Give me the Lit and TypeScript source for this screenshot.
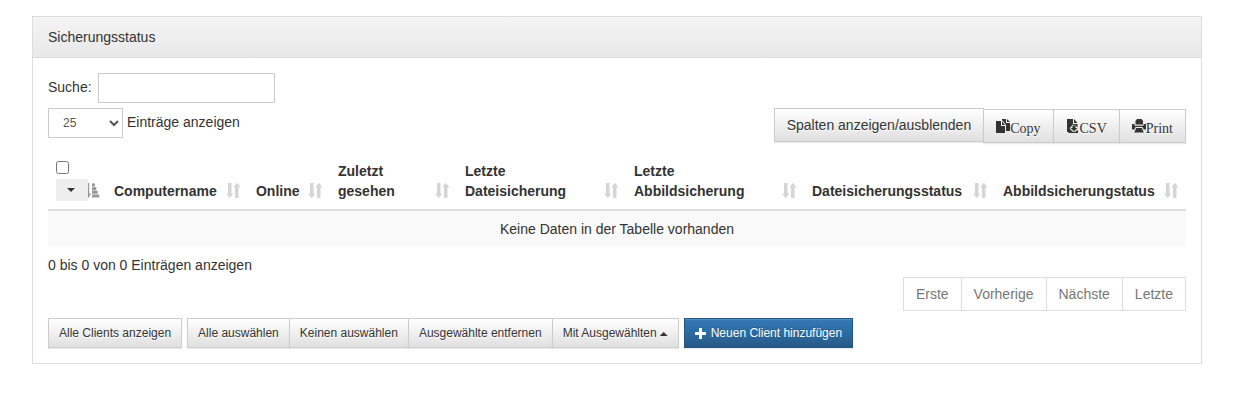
import { LitElement, html, css, svg } from "lit";
import { customElement } from "lit/decorators.js";

const icon = (name: string, body: unknown, height = 14) => html`
  <svg class="icon ${name}" width="14" height=${height} viewBox="0 0 14 ${height}" aria-hidden="true">${body}</svg>`;

const duplicate = svg`
  <path d="M0 2h5v5h4v7H0z M6 2.300 9 6H6z"/>
  <path d="M6 0h4v4h4v8h-4V6L6.500 1.500H6z M11 0l3 3h-3z"/>`;
const saveFile = svg`
  <path d="M1 0h6v5h4.500v3.500L9.500 6.500 6.500 5.500 5 8 3.500 9l2 3-1.500 1H1z"/>
  <path d="M8 0 11.500 4H8z"/>
  <path d="M6.500 6.500h3V9h2L8 12.300 4.500 9h2z"/>
  <path d="M2.500 11.200h2.500l1.500 1.600h3l1.500-1.600H12V14H2.500z"/>`;
const printer = svg`
  <path d="M5 0h4.500l1.500 2v3.500H3.500V2z"/>
  <path d="M0 5h2.500v1.700h9V5H14v5.500h-2.300L10.500 8h-7L2.300 10.500H0z"/>
  <path d="M4.200 9h5.600l2 4.500H2.200z"/>`;
const sortBoth = svg`
  <path d="M2 0h3.500v10.500H7.300L4 15h-.4L0 10.500h2z"/>
  <path d="M9 15h3.500V4.500h2L11 0h-.4L7.200 4.500H9z"/>`;
const sortAsc = svg`
  <path d="M2.200 0h2v10.500h2L3.500 15 0 10.500h2.200z"/>
  <path d="M7 .500h3v3H7z M7 4.200h4.300v3H7z M7 7.800h5.700v3H7z M7 11.400h7.300v3H7z"/>`;
const plus = svg`<path d="M4 0h3v4h4v3H7v4H4V7H0V4h4z"/>`;

const columns = [
  { label: "Computername", width: 142 },
  { label: "Online", width: 82 },
  { label: "Zuletzt gesehen", width: 127 },
  { label: "Letzte Dateisicherung", width: 169 },
  { label: "Letzte Abbildsicherung", width: 178 },
  { label: "Dateisicherungsstatus", width: 191 },
  { label: "Abbildsicherungstatus", width: 191 },
];
const total = 1138;
const share = (width: number) => `width:${(width / total) * 100}%`;

@customElement("app-root")
export class AppRoot extends LitElement {
  static styles = css`
    :host {
      display: block;
      padding: 16px 42px 16px 32px;
      font: 14px/20px "Liberation Sans", Arial, sans-serif;
      color: #333;
    }
    *, *::before, *::after { box-sizing: border-box; }
    .panel { border: 1px solid #ddd; background: #fff; }
    .heading {
      padding: 10px 15px;
      border-bottom: 1px solid #ddd;
      background: linear-gradient(#f5f5f5, #e8e8e8);
    }
    .title { margin: 0; font: inherit; }
    .body { padding: 15px; }
    .search, .length-label { display: flex; align-items: flex-start; height: 30px; }
    .search { gap: 6px; }
    .length-label { gap: 4px; }
    .field-label { padding-top: 4px; }
    input, select, button { font-family: inherit; border-radius: 0; margin: 0; }
    .search-box, .length {
      height: 30px;
      border: 1px solid #ccc;
      background: #fff;
      color: #555;
      font-size: 12px;
      padding: 5px 10px;
    }
    .search-box { width: 177px; }
    .length { width: 75px; }
    .tools { display: flex; justify-content: space-between; align-items: flex-start; margin-top: 5px; }
    .group { display: flex; align-items: flex-start; }
    .group > * + * { margin-left: -1px; }
    .export { padding-top: 1px; font-family: "Liberation Serif", serif; }
    .btn {
      display: flex;
      align-items: center;
      padding: 6px 12px;
      font-size: 14px;
      line-height: 20px;
      color: #333;
      white-space: nowrap;
      border: 1px solid #ccc;
      background: linear-gradient(#fff, #e0e0e0);
      text-shadow: 0 1px 0 #fff;
      box-shadow: inset 0 1px 0 rgba(255, 255, 255, 0.15), 0 1px 1px rgba(0, 0, 0, 0.075);
    }
    .export .btn { align-items: flex-start; padding: 9px 12px 3px; }
    .small { padding: 5px 10px; font-size: 12px; line-height: 18px; }
    .primary {
      gap: 5px;
      color: #fff;
      border-color: #245580;
      background: linear-gradient(#337ab7, #265a88);
      text-shadow: 0 -1px 0 rgba(0, 0, 0, 0.2);
    }
    .icon { display: block; flex: none; fill: currentColor; overflow: visible; }
    .caret {
      width: 8px;
      height: 4px;
      background: currentColor;
      clip-path: polygon(0 0, 100% 0, 50% 100%);
    }
    .caret.up { clip-path: polygon(50% 0, 100% 100%, 0 100%); margin: 2px 0 0 3px; }
    table { width: 100%; margin-top: 10px; border-collapse: collapse; table-layout: fixed; }
    th { padding: 8px; text-align: left; vertical-align: bottom; border-bottom: 2px solid #ddd; }
    .head { display: flex; align-items: flex-end; justify-content: space-between; }
    .head .icon { opacity: 0.2; margin-bottom: 3px; }
    .name { min-width: 0; padding-right: 14px; }
    .head.tight .name { padding-right: 0; white-space: nowrap; }
    .select-head { position: relative; display: flex; flex-direction: column; height: 40px; justify-content: space-between; }
    .check { width: 13px; height: 13px; }
    .menu {
      position: relative;
      display: flex;
      align-items: center;
      justify-content: center;
      width: 32px;
      height: 22px;
      padding: 0 2px 0 0;
      border: 0;
      background: #eee;
      color: #333;
    }
    .select-head .icon { position: absolute; right: -1px; bottom: 3px; opacity: 0.5; }
    td { padding: 8px; text-align: center; background: #f9f9f9; }
    .info { margin-top: 8px; }
    .pages { display: flex; justify-content: flex-end; margin: 2px 0 7px; padding: 0; list-style: none; }
    .pages li + li { margin-left: -1px; }
    .pages a {
      display: block;
      padding: 6px 12px;
      border: 1px solid #ddd;
      color: #777;
      text-decoration: none;
    }
    .actions { display: flex; gap: 5px; flex-wrap: wrap; }
  `;

  render() {
    return html`
      <section class="panel">
        <header class="heading"><h3 class="title">Sicherungsstatus</h3></header>
        <div class="body">
          <div class="search">
            <label class="field-label" for="search">Suche:</label>
            <input class="search-box" id="search" type="search" />
          </div>
          <div class="tools">
            <div class="length-label">
              <select class="length" id="length">
                <option>10</option>
                <option selected>25</option>
                <option>50</option>
                <option>100</option>
              </select>
              <label class="field-label" for="length">Einträge anzeigen</label>
            </div>
            <div class="group">
              <button class="btn" type="button">Spalten anzeigen/ausblenden</button>
              <div class="group export">
                <button class="btn" type="button">${icon("dup", duplicate)}<span>Copy</span></button>
                <button class="btn" type="button">${icon("save", saveFile)}<span>CSV</span></button>
                <button class="btn" type="button">${icon("print", printer)}<span>Print</span></button>
              </div>
            </div>
          </div>
          <table>
            <colgroup>
              <col style=${share(58)} />
              ${columns.map((c) => html`<col style=${share(c.width)} />`)}
            </colgroup>
            <thead>
              <tr>
                <th>
                  <div class="select-head">
                    <input class="check" type="checkbox" aria-label="Alle auswählen" />
                    ${icon("asc", sortAsc, 15)}
                    <button class="menu" type="button" aria-label="Auswahl"><span class="caret"></span></button>
                  </div>
                </th>
                ${columns.map(
                  (c) => html`<th>
                    <div class="head ${c.label.includes(" ") ? "" : "tight"}">
                      <span class="name">${c.label}</span>${icon("sort", sortBoth, 15)}
                    </div>
                  </th>`
                )}
              </tr>
            </thead>
            <tbody>
              <tr><td colspan="8">Keine Daten in der Tabelle vorhanden</td></tr>
            </tbody>
          </table>
          <div class="info">0 bis 0 von 0 Einträgen anzeigen</div>
          <ul class="pages">
            ${["Erste", "Vorherige", "Nächste", "Letzte"].map((p) => html`<li><a href="#">${p}</a></li>`)}
          </ul>
          <div class="actions">
            <button class="btn small" type="button">Alle Clients anzeigen</button>
            <div class="group">
              <button class="btn small" type="button">Alle auswählen</button>
              <button class="btn small" type="button">Keinen auswählen</button>
              <button class="btn small" type="button">Ausgewählte entfernen</button>
              <button class="btn small" type="button">Mit Ausgewählten<span class="caret up"></span></button>
            </div>
            <button class="btn small primary" type="button">
              <svg class="icon" width="11" height="11" viewBox="0 0 11 11" aria-hidden="true">${plus}</svg>
              <span>Neuen Client hinzufügen</span>
            </button>
          </div>
        </div>
      </section>
    `;
  }
}
